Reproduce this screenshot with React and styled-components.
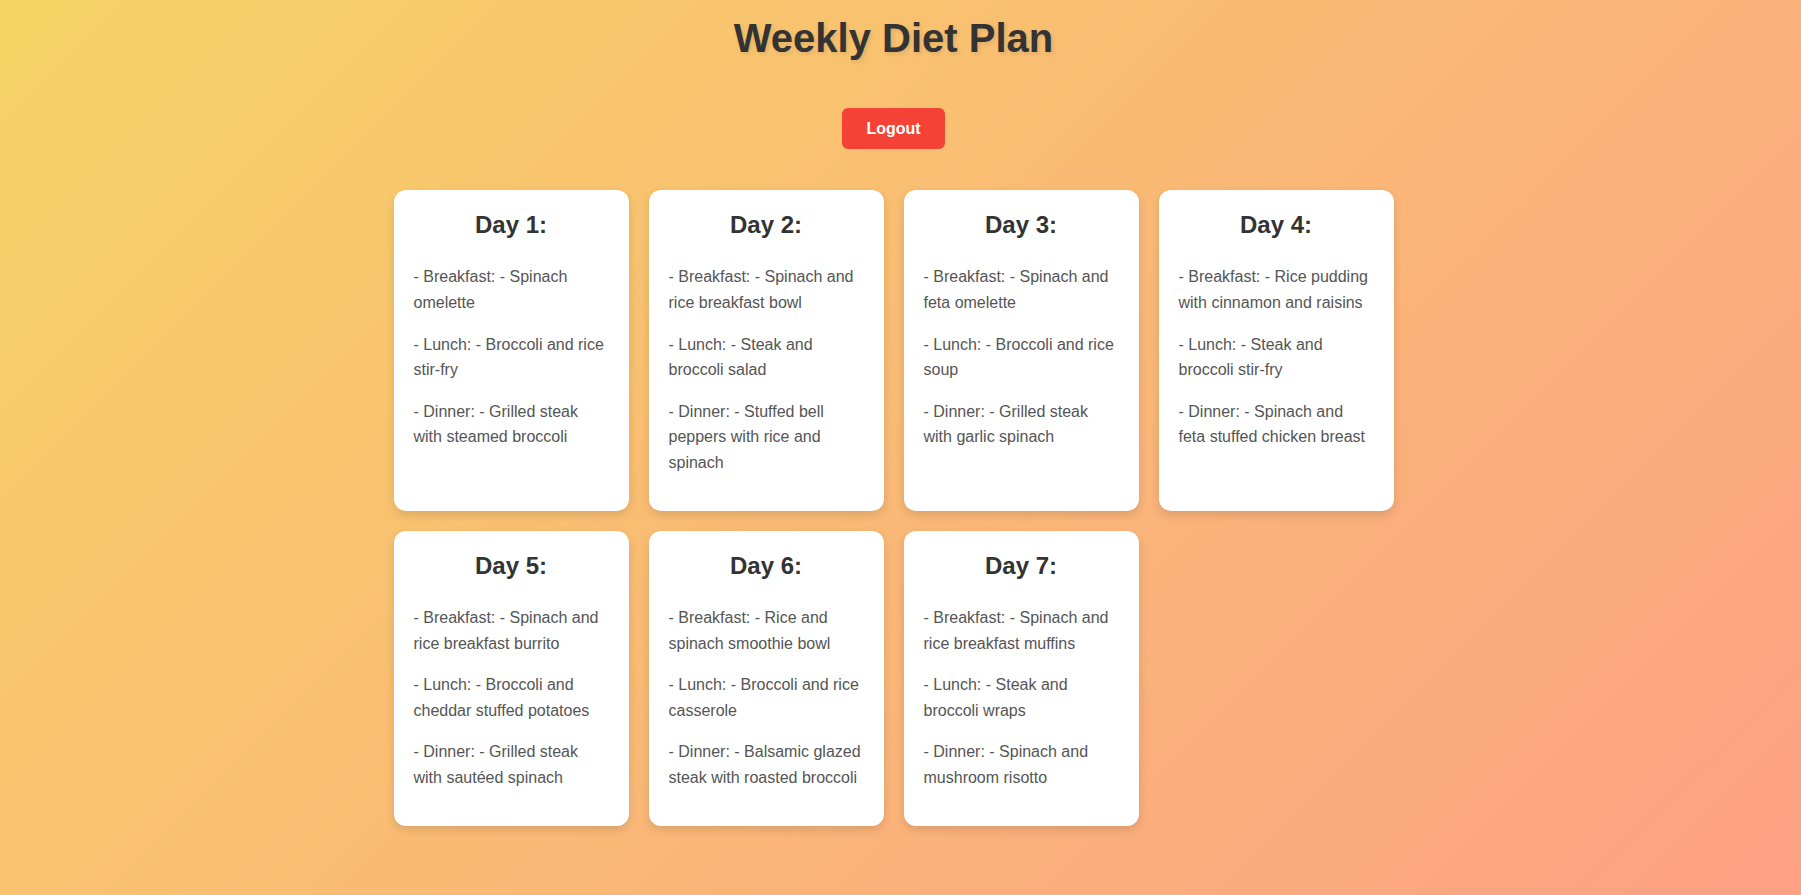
import React from "react";
import styled, { createGlobalStyle } from "styled-components";

const GlobalStyle = createGlobalStyle`
  html, body {
    margin: 0;
    padding: 0;
  }
  body {
    font-family: "Liberation Sans", Arial, Helvetica, sans-serif;
    min-height: 100vh;
    background: linear-gradient(135deg, #f6d365 0%, #fda085 100%);
    background-attachment: fixed;
  }
`;

const Page = styled.div`
  min-height: 100vh;
  box-sizing: border-box;
  padding: 15px 14px 40px 0;
  display: flex;
  flex-direction: column;
  align-items: center;
`;

const Title = styled.h1`
  margin: 0;
  font-size: 40px;
  line-height: 46px;
  font-weight: 700;
  color: #333;
  text-shadow: 2px 2px 4px rgba(0, 0, 0, 0.1);
`;

const LogoutButton = styled.button`
  margin: 47px 0 41px;
  padding: 11px 24px;
  font-family: inherit;
  font-size: 16px;
  line-height: 19px;
  font-weight: 700;
  color: #fff;
  background: #f44336;
  border: none;
  border-radius: 6px;
  cursor: pointer;
`;

const Grid = styled.div`
  width: 100%;
  max-width: 1000px;
  display: grid;
  grid-template-columns: repeat(4, 1fr);
  gap: 20px;
  align-items: start;
`;

const Card = styled.div`
  background: #fff;
  border-radius: 12px;
  box-shadow: 0 4px 10px rgba(0, 0, 0, 0.12);
  padding: 16px 20px 19px;
  line-height: 1.6;
  align-self: stretch;
`;

const DayTitle = styled.h2`
  margin: 0 0 20px;
  font-size: 24px;
  font-weight: 700;
  color: #333;
  text-align: center;
`;

const Meal = styled.p`
  margin: 16px 0;
  font-size: 16px;
  color: #555;
`;

const plan = [
  {
    day: "Day 1:",
    meals: [
      "- Breakfast: - Spinach omelette",
      "- Lunch: - Broccoli and rice stir-fry",
      "- Dinner: - Grilled steak with steamed broccoli",
    ],
  },
  {
    day: "Day 2:",
    meals: [
      "- Breakfast: - Spinach and rice breakfast bowl",
      "- Lunch: - Steak and broccoli salad",
      "- Dinner: - Stuffed bell peppers with rice and spinach",
    ],
  },
  {
    day: "Day 3:",
    meals: [
      "- Breakfast: - Spinach and feta omelette",
      "- Lunch: - Broccoli and rice soup",
      "- Dinner: - Grilled steak with garlic spinach",
    ],
  },
  {
    day: "Day 4:",
    meals: [
      "- Breakfast: - Rice pudding with cinnamon and raisins",
      "- Lunch: - Steak and broccoli stir-fry",
      "- Dinner: - Spinach and feta stuffed chicken breast",
    ],
  },
  {
    day: "Day 5:",
    meals: [
      "- Breakfast: - Spinach and rice breakfast burrito",
      "- Lunch: - Broccoli and cheddar stuffed potatoes",
      "- Dinner: - Grilled steak with sautéed spinach",
    ],
  },
  {
    day: "Day 6:",
    meals: [
      "- Breakfast: - Rice and spinach smoothie bowl",
      "- Lunch: - Broccoli and rice casserole",
      "- Dinner: - Balsamic glazed steak with roasted broccoli",
    ],
  },
  {
    day: "Day 7:",
    meals: [
      "- Breakfast: - Spinach and rice breakfast muffins",
      "- Lunch: - Steak and broccoli wraps",
      "- Dinner: - Spinach and mushroom risotto",
    ],
  },
];

export default function App() {
  return (
    <>
      <GlobalStyle />
      <Page>
        <Title>Weekly Diet Plan</Title>
        <LogoutButton type="button">Logout</LogoutButton>
        <Grid>
          {plan.map((d) => (
            <Card key={d.day}>
              <DayTitle>{d.day}</DayTitle>
              {d.meals.map((m) => (
                <Meal key={m}>{m}</Meal>
              ))}
            </Card>
          ))}
        </Grid>
      </Page>
    </>
  );
}
